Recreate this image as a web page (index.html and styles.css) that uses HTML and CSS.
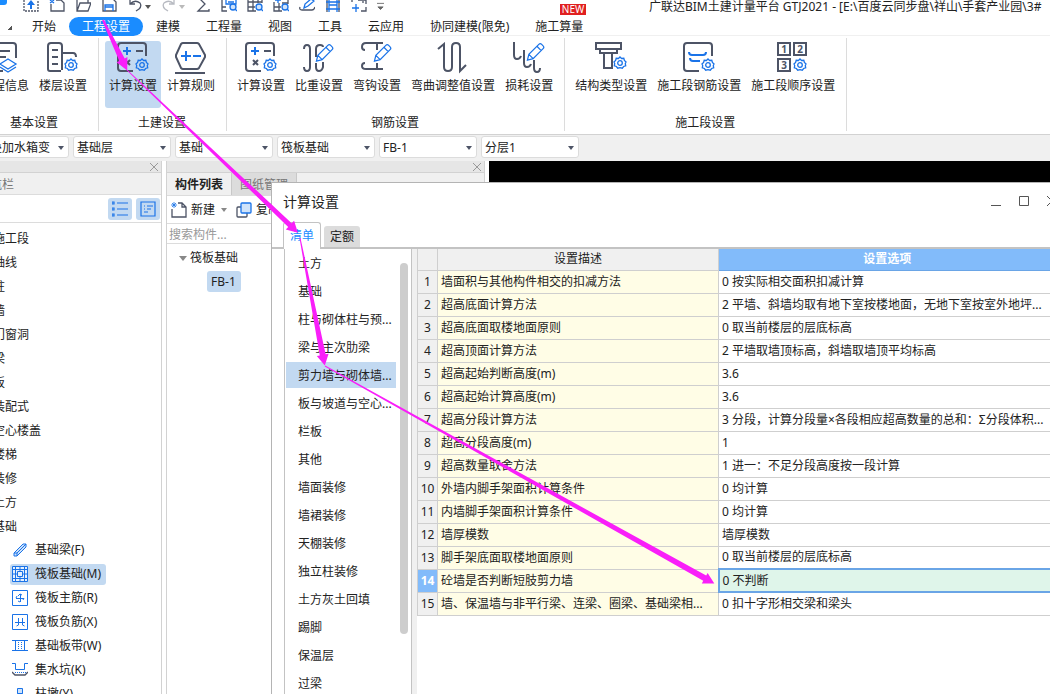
FILE: index.html
```html
<!DOCTYPE html>
<html lang="zh-CN">
<head>
<meta charset="utf-8">
<title>广联达BIM土建计量平台 GTJ2021</title>
<link rel="stylesheet" href="styles.css">
</head>
<body>
<svg class="defs" aria-hidden="true">
  <symbol id="gear" viewBox="0 0 14 14"><path d="M7 1l1.6 1.5 2.2-.2.6 2.1L13 6l-.7 1.6.4 2.2-2.1.7L9.300 12.200 7 11.700 4.700 12.200 3.400 10.500l-2.100-.7.4-2.200L1 6l1.600-1.600.6-2.100 2.200.2z"/><circle cx="7" cy="7" r="2.300"/></symbol>
  <symbol id="pencil" viewBox="0 0 20 20"><path d="M1.500 18.500l1.500-6L13.500 2q1.500-1.500 3 0l1.500 1.500q1.500 1.500 0 3L7.500 17zM11.500 4l4.500 4.500M3 12.500l4.500 4.500"/></symbol>
  <symbol id="calc" viewBox="0 0 32 32"><path class="d" d="M29 14V4q0-3-3-3H4Q1 1 1 4v22q0 3 3 3h12M19 9h7M8 18l5 5M13 18l-5 5"/><path class="b" d="M6 9h8M10 5v8"/><use href="#gear" class="t" x="18" y="16" width="14" height="14"/></symbol>
</svg>
<div class="app">
  <header class="titlebar">
    <div class="quick">
      <svg class="logo" viewBox="0 0 13 12"><path d="M0 0h7v2q0 3-3 3H0z" fill="#1a8cff"/></svg>
      <svg viewBox="0 4 16 12"><path class="d thin dash" d="M1 4v11h14V4"/><path class="b" d="M8 13V6"/><path d="M4 9l4-5 4 5z" fill="#1a73e8"/></svg>
      <svg viewBox="0 4 16 12"><path class="d thin" d="M2 8v7h13V7l-3-3H7"/><path class="b thin" d="M1 4l4 3M5 4L1 7"/></svg>
      <svg viewBox="0 4 16 12"><path class="d thin" d="M2 3v12h11l3-8H5L2 15M13 7V4"/></svg>
      <svg viewBox="0 4 16 12"><path class="d thin" d="M2 2v13h13V6l-3-3"/><path class="b thin" d="M4 15V9h8v6M4 11h8"/></svg>
      <span class="pair"><svg viewBox="0 4 16 12"><path class="d thin" d="M3 3v5h5M3 8q5-5 10-1 2 3-1 6l-3 2"/></svg><i class="caret"></i></span>
      <span class="pair faded"><svg viewBox="0 4 16 12"><path class="d thin" d="M13 3v5H8M13 8Q8 3 3 7q-2 3 1 6l3 2"/></svg><i class="caret"></i></span>
      <svg viewBox="0 4 16 12"><path class="d thin" d="M4 2l6 6-7 7h11v-2"/></svg>
      <svg viewBox="0 4 16 12"><path class="d thin" d="M1 2v13h5M1 11h4"/><path class="b thin" d="M5 3v5h10V3M7 6h6M14 13l2 2"/><circle class="b thin tint" cx="12" cy="11" r="3"/></svg>
      <svg viewBox="0 4 16 12"><path class="d thin" d="M1 2v13h8M1 6h14M1 11h7M6 2v13M11 2v5M15 2v5"/><circle class="b thin tint" cx="12" cy="11" r="3"/><path class="b thin" d="M14 13l2 2"/></svg>
      <svg viewBox="0 4 16 12"><path class="d thin" d="M1 6v9h8M1 11h7M6 7v8M15 3v5M9 7h6"/><path class="b thin" d="M2 4h6M5 3v4M14 13l2 2"/><circle class="b thin tint" cx="12" cy="11" r="3"/></svg>
      <svg viewBox="0 4 16 12"><path class="d thin" d="M1 11q-1 3 2 3h10q2 0 3-3"/><path class="b thin" d="M5 12l1-4 6-5 3 2-6 5z"/></svg>
      <svg viewBox="0 4 16 12"><path class="d thin" d="M2 2v14M14 2v14"/><path class="b thin" d="M4 2v14M12 2v14M1 6h14M1 13h14M4 9h8"/></svg>
      <svg viewBox="0 4 16 12"><path class="d thin" d="M1 6V4M7 4h8v4M15 11v4h-5M12 5v2"/><path class="b thin" d="M1 12h7M5 8v8"/></svg>
      <svg class="more" viewBox="0 0 8 12"><path d="M0 3h8M1 7h6L4 10z" stroke="#666" fill="#666"/></svg>
    </div>
    <h1 class="window-title">广联达BIM土建计量平台 GTJ2021 - [E:\百度云同步盘\祥山\手套产业园\3#</h1>
  </header>

  <nav class="menu">
    <i class="corner"></i>
    <button>开始</button><button class="current">工程设置</button><button>建模</button><button>工程量</button><button>视图</button><button>工具</button><button>云应用</button><button>协同建模(限免)</button><button class="has-badge">施工算量<span class="badge">NEW</span></button>
  </nav>

  <section class="ribbon">
    <div class="group first">
      <div class="tools">
        <button><svg viewBox="0 0 32 32"><path class="d" d="M14 29H4q-3 0-3-3V4q0-3 3-3h20q3 0 3 3v12M8 9h13M8 15h9"/><path class="t" d="M19 17l8 5-8 5-8-5zM11 25l8 5 8-5"/></svg>工程信息</button>
        <button><svg viewBox="0 0 32 32"><path class="d" d="M14 29H3q-2 0-2-2V4q0-3 3-3h8q3 0 3 3v24M15 11h11q3 0 3 4M5 8h6M5 15h6M5 22h6"/><use href="#gear" class="t" x="17" y="16" width="14" height="14"/></svg>楼层设置</button>
      </div>
      <div class="caption">基本设置</div>
    </div>
    <div class="group">
      <div class="tools">
        <button class="selected"><svg viewBox="0 0 32 32"><use href="#calc"/></svg>计算设置</button>
        <button><svg viewBox="0 0 32 32"><path class="d" d="M8 1h14q1 0 2 1l6 11v2l-6 11q-1 1-2 1H8q-1 0-2-1L1 15v-2L6 2q1-1 2-1zM0 31h30"/><path class="b" d="M6 14h10M11 9v10M18 14h8"/></svg>计算规则</button>
      </div>
      <div class="caption">土建设置</div>
    </div>
    <div class="group">
      <div class="tools">
        <button><svg viewBox="0 0 32 32"><use href="#calc"/></svg>计算设置</button>
        <button><svg viewBox="0 0 32 32"><path class="d" d="M1 7q0-4 3-4t3 4v18q0 4-3 4t-3-4M13 15V7q0-4 4-4 3 0 3 2M13 21v4q0 4 3 4t4-4v-5"/><use href="#pencil" class="t" x="12" y="1" width="19" height="20"/></svg>比重设置</button>
        <button><svg viewBox="0 0 32 32"><path class="d" d="M4 8Q1 8 1 5q0-4 4-4h17M16 1v7M4 21q-3 0-3 3 0 3 4 3h17M16 27v-6"/><use href="#pencil" class="t" x="12" y="1" width="19" height="20"/></svg>弯钩设置</button>
        <button><svg viewBox="0 0 32 32"><path class="d" d="M1 7l6-5v23q0 4 4 4t4-4V5q0-4 4-4t4 4v24l6-6"/></svg>弯曲调整值设置</button>
        <button><svg viewBox="0 0 32 32"><path class="d" d="M1 0v13q0 4 3 4t4-3M11 8v13q0 4 3 4t4-3M21 18v8q0 4 3 4t3-4"/><use href="#pencil" class="t" x="13" y="0" width="19" height="20"/></svg>损耗设置</button>
      </div>
      <div class="caption">钢筋设置</div>
    </div>
    <div class="group">
      <div class="tools">
        <button><svg viewBox="0 0 32 32"><path class="d" d="M1 1h25v6H1zM5 7v4h17V7M9 11v15h8V11"/><use href="#gear" class="t" x="18" y="14" width="14" height="14"/></svg>结构类型设置</button>
        <button><svg viewBox="0 0 32 32"><path class="d" d="M29 14V4q0-3-3-3H4Q1 1 1 4v22q0 3 3 3h12"/><path class="b" d="M6 10q0 3 3 3h11q3 0 3-3M7 16q0 3 3 3h7"/><use href="#gear" class="t" x="18" y="16" width="14" height="14"/></svg>施工段钢筋设置</button>
        <button><svg viewBox="0 0 32 32"><path class="d" d="M1 1h12v12H1zM17 1h12v12H17zM1 17h12v12H1z"/><g class="digits"><text x="7" y="11">1</text><text x="23" y="11">2</text><text x="7" y="27">3</text></g><use href="#gear" class="t" x="16" y="16" width="14" height="14"/></svg>施工段顺序设置</button>
      </div>
      <div class="caption">施工段设置</div>
    </div>
  </section>

  <div class="filters">
    <label class="combo"><select aria-label="工程"><option>叠加水箱变</option></select></label>
    <label class="combo"><select aria-label="楼层"><option>基础层</option></select></label>
    <label class="combo"><select aria-label="构件大类"><option>基础</option></select></label>
    <label class="combo"><select aria-label="构件类型"><option>筏板基础</option></select></label>
    <label class="combo"><select aria-label="构件"><option>FB-1</option></select></label>
    <label class="combo"><select aria-label="分层"><option>分层1</option></select></label>
  </div>

  <main class="work">
    <aside class="panel navigator">
      <div class="grip"><button class="close" aria-label="关闭"><svg viewBox="0 0 8 8"><path d="M0 0l8 8M8 0L0 8"/></svg></button></div>
      <h2 class="panel-title">导航栏</h2>
      <div class="view-buttons">
        <button aria-label="列表"><svg viewBox="0 0 16 16"><path class="t" d="M0 1h2v2H0zM0 7h2v2H0zM0 13h2v2H0zM5 2h11M5 8h11M5 14h11"/></svg></button>
        <button aria-label="详情"><svg viewBox="0 0 16 16"><path class="t" d="M1 1h14v14H1zM4 5h1M7 5h6M4 8h1M7 8h4M4 11h4"/></svg></button>
      </div>
      <ul class="tree">
        <li>施工段</li><li>轴线</li><li>柱</li><li>墙</li><li>门窗洞</li><li>梁</li><li>板</li><li>装配式</li><li>空心楼盖</li><li>楼梯</li><li>装修</li><li>土方</li><li>基础</li>
      </ul>
      <ul class="leaves">
        <li><span><svg viewBox="0 0 16 16"><path class="t tint" d="M2 11L11 2h3v3L5 14H2zM2 11h3v3M5 11l9-9"/></svg>基础梁(F)</span></li>
        <li><span class="selected"><svg viewBox="0 0 16 16"><path class="t pale" d="M.5.5h15v15H.5zM.5 3.500h15M.5 12.500h15M3.500.5v15M12.500.5v15M5.500 5.500h5v5h-5zM8 .5v5M8 10.500v5M.5 8h5M10.500 8h5"/></svg>筏板基础(M)</span></li>
        <li><span><svg viewBox="0 0 16 16"><path class="t" d="M.5.5h15v15H.5zM4 8.500h8M8.500 4v8M6 6l2-2 2 1M6 11l2 1M4 8l1-2M12 8l-1 2"/></svg>筏板主筋(R)</span></li>
        <li><span><svg viewBox="0 0 16 16"><path class="t" d="M.5.5h15v15H.5zM3 8.500h10M6.500 4v7l-2 1M10.500 4v7l2 1"/></svg>筏板负筋(X)</span></li>
        <li><span><svg viewBox="0 0 16 16"><path class="t" d="M0 2.500h16M0 12.500h16M3.500 3v10M12.500 3v10"/><path class="t dots" d="M6.500 4v8M9.500 4v8"/></svg>基础板带(W)</span></li>
        <li><span><svg viewBox="0 0 16 16"><path class="t" d="M0 1.500h3.500v6h9v-6H16"/><path class="t dots" d="M3 10.500h11"/><path class="d thin" d="M0 10l3 3h10l3-3"/></svg>集水坑(K)</span></li>
        <li><span><svg viewBox="0 0 16 16"><path class="t tint" d="M5.500 2.500h5v5h-5zM5 8l-2 6h10l-2-6z"/></svg>柱墩(Y)</span></li>
      </ul>
    </aside>

    <section class="panel components">
      <div class="grip"><button class="close" aria-label="关闭"><svg viewBox="0 0 8 8"><path d="M0 0l8 8M8 0L0 8"/></svg></button></div>
      <div class="panel-tabs"><button class="current">构件列表</button><button>图纸管理</button></div>
      <div class="actions">
        <button><svg viewBox="0 0 16 16"><path class="d thin" d="M1 7v8h14V5l-4-4H7M11 1v4h4"/><path class="b fine" d="M1 1l4 4M5 1L1 5M3 0v6M0 3h6"/></svg>新建<i class="caret"></i></button>
        <button><svg viewBox="0 0 16 16"><path class="d thin" d="M5 5H2q-1 0-1 1v8q0 1 1 1h8q1 0 1-1v-3"/><rect class="t tint" x="5" y="1" width="10" height="10" rx="1"/></svg>复制</button>
      </div>
      <input class="search" type="text" placeholder="搜索构件..." aria-label="搜索构件">
      <div class="node"><i class="caret"></i>筏板基础</div>
      <div class="leaf">FB-1</div>
    </section>

    <section class="canvas" aria-label="绘图区"></section>
  </main>

  <section class="dialog" role="dialog" aria-label="计算设置">
    <header class="dialog-head">
      <h2>计算设置</h2>
      <div class="window-buttons">
        <button aria-label="最小化"><svg viewBox="0 0 10 10"><path d="M0 9.500h10"/></svg></button>
        <button aria-label="最大化"><svg viewBox="0 0 10 10"><path d="M.5.5h9v9h-9z"/></svg></button>
        <button aria-label="关闭"><svg viewBox="0 0 10 10"><path d="M0 0l10 10M10 0L0 10"/></svg></button>
      </div>
    </header>
    <div class="dialog-tabs"><button class="current">清单</button><button>定额</button></div>
    <div class="dialog-body">
      <div class="side">
        <ul class="categories">
          <li>土方</li><li>基础</li><li>柱与砌体柱与预...</li><li>梁与主次肋梁</li><li class="selected">剪力墙与砌体墙...</li><li>板与坡道与空心...</li><li>栏板</li><li>其他</li><li>墙面装修</li><li>墙裙装修</li><li>天棚装修</li><li>独立柱装修</li><li>土方灰土回填</li><li>踢脚</li><li>保温层</li><li>过梁</li>
        </ul>
        <div class="scroll"><i></i></div>
      </div>
      <div class="sheet">
        <table>
          <colgroup><col class="c-no"><col class="c-desc"><col></colgroup>
          <thead><tr><th></th><th>设置描述</th><th class="active">设置选项</th></tr></thead>
          <tbody>
            <tr><th>1</th><td>墙面积与其他构件相交的扣减方法</td><td>0 按实际相交面积扣减计算</td></tr>
            <tr><th>2</th><td>超高底面计算方法</td><td>2 平墙、斜墙均取有地下室按楼地面，无地下室按室外地坪...</td></tr>
            <tr><th>3</th><td>超高底面取楼地面原则</td><td>0 取当前楼层的层底标高</td></tr>
            <tr><th>4</th><td>超高顶面计算方法</td><td>2 平墙取墙顶标高，斜墙取墙顶平均标高</td></tr>
            <tr><th>5</th><td>超高起始判断高度(m)</td><td>3.6</td></tr>
            <tr><th>6</th><td>超高起始计算高度(m)</td><td>3.6</td></tr>
            <tr><th>7</th><td>超高分段计算方法</td><td>3 分段，计算分段量×各段相应超高数量的总和：Σ分段体积...</td></tr>
            <tr><th>8</th><td>超高分段高度(m)</td><td>1</td></tr>
            <tr><th>9</th><td>超高数量取舍方法</td><td>1 进一：不足分段高度按一段计算</td></tr>
            <tr><th>10</th><td>外墙内脚手架面积计算条件</td><td>0 均计算</td></tr>
            <tr><th>11</th><td>内墙脚手架面积计算条件</td><td>0 均计算</td></tr>
            <tr><th>12</th><td>墙厚模数</td><td>墙厚模数</td></tr>
            <tr><th>13</th><td>脚手架底面取楼地面原则</td><td>0 取当前楼层的层底标高</td></tr>
            <tr class="picked"><th>14</th><td>砼墙是否判断短肢剪力墙</td><td>0 不判断</td></tr>
            <tr><th>15</th><td>墙、保温墙与非平行梁、连梁、圈梁、基础梁相...</td><td>0 扣十字形相交梁和梁头</td></tr>
          </tbody>
        </table>
      </div>
    </div>
  </section>

  <svg class="arrows" aria-hidden="true">
    <path transform="translate(103 20) rotate(64.400)" d="M0-1L44-3v-3L56 0 44 6V3L0 1z"/>
    <path transform="translate(127 70) rotate(43.600)" d="M0-.5L225-2.500V-6L236 0 225 6V2.500L0 .5z"/>
    <path transform="translate(300 238) rotate(79)" d="M0-.5L119-3v-3L130 0 119 6V3L0 .5z"/>
    <path transform="translate(325 366) rotate(29.200)" d="M0-.5L435-3v-3L446 0 435 6V3L0 .5z"/>
  </svg>
</div>
</body>
</html>
```
FILE: styles.css
```css
* { box-sizing: border-box; }

body {
  margin: 0;
  background: #fff;
  color: #222;
  font: 12px/16px "Noto Sans", "Noto Sans CJK SC", sans-serif;
}

h1, h2, ul { margin: 0; padding: 0; font-size: 12px; font-weight: 400; }
ul { list-style: none; }

button {
  margin: 0;
  padding: 0;
  border: 0;
  background: none;
  color: inherit;
  font: inherit;
  white-space: nowrap;
}

svg { display: block; flex: none; fill: none; }
.defs { position: absolute; width: 0; height: 0; }
.d { stroke: #4d5466; stroke-width: 2; fill: none; }
.b { stroke: #1a73e8; stroke-width: 2; fill: none; }
.t { stroke: #1a73e8; stroke-width: 1.3; fill: none; }
.thin { stroke-width: 1.3; }
.fine { stroke-width: .8; }
.dash { stroke-dasharray: 2 1; }
.dots { stroke-dasharray: 1 1; }
.tint { fill: #cfe3fa; }
.pale { fill: #e6f1fd; }
.digits { fill: #4d5466; font-size: 10px; font-weight: 700; text-anchor: middle; }

.caret {
  flex: none;
  border: 3px solid transparent;
  border-top: 4px solid #555;
  border-bottom: 0;
}

.app {
  position: relative;
  display: flex;
  flex-direction: column;
  height: 100vh;
  overflow: hidden;
}

/* Title bar */
.titlebar { display: flex; flex: none; height: 17px; }
.quick { display: flex; flex: none; gap: 10px; width: 649px; }
.quick svg { width: 16px; height: 12px; }
.quick .logo { width: 13px; }
.quick .more { width: 7px; }
.pair { display: flex; align-items: center; gap: 2px; height: 12px; }
.pair .caret { margin-top: 1px; }
.faded { opacity: .4; }
.window-title { line-height: 13px; white-space: nowrap; }

/* Menu */
.menu {
  display: flex;
  flex: none;
  align-items: center;
  height: 19px;
  border-bottom: 1px solid #f0f0f0;
}
.menu button { height: 19px; padding: 1px 13px 0; }
.menu .current { border-radius: 10px; background: #1a8cff; color: #fff; }
.menu .corner {
  width: 4px;
  height: 4px;
  margin: 4px 7px 0 8px;
  background: linear-gradient(135deg, transparent 50%, #555 50%);
}
.has-badge { position: relative; }
.badge {
  position: absolute;
  right: 10px;
  top: -13px;
  padding: 0 2px;
  background: #e02020;
  color: #fff;
  font-size: 10px;
  line-height: 11px;
}

/* Ribbon */
.ribbon {
  display: flex;
  flex: none;
  padding: 2px 0 3px;
  border-bottom: 1px solid #d2d2d2;
}
.group { padding: 3px 7px 0 6px; border-right: 1px solid #dcdcdc; }
.group.first { margin-left: -29px; }
.tools { display: flex; gap: 2px; }
.tools button {
  display: flex;
  flex-direction: column;
  align-items: center;
  gap: 4px;
  height: 67px;
  padding: 1px 4px 0;
  border-radius: 3px;
}
.tools svg { width: 32px; height: 32px; }
.tools .selected { background: #c2d9f1; }
.caption { padding-top: 7px; text-align: center; }

/* Filter row */
.filters {
  display: flex;
  flex: none;
  gap: 4px;
  height: 26px;
  padding: 1px 0 3px;
  margin-left: -29px;
  background: #f0f0f0;
}
.combo { position: relative; width: 98px; }
.combo select {
  width: 100%;
  height: 22px;
  padding: 1px 3px 0;
  border: 1px solid #dcdcdc;
  border-radius: 3px;
  background: #fff;
  color: #222;
  font: inherit;
  appearance: none;
}
.combo:first-child select { padding-left: 18px; }
.combo::after {
  content: "";
  position: absolute;
  right: 5px;
  top: 10px;
  border: 3px solid transparent;
  border-top: 4px solid #4d5466;
  border-bottom: 0;
}

/* Work area */
.work { display: flex; flex: 1; gap: 4px; min-height: 0; }
.panel { flex: none; overflow: hidden; border-right: 1px solid #d2d2d2; }
.navigator { width: 162px; }
.components { width: 319px; border-left: 1px solid #d2d2d2; }
.canvas { flex: 1; height: 22px; background: #000; }
.grip {
  display: flex;
  justify-content: flex-end;
  align-items: center;
  height: 12px;
  padding-right: 3px;
  border-bottom: 1px solid #d2d2d2;
  background: #e6e6e6;
}
.close svg { width: 8px; height: 8px; stroke: #999; }
.panel-title {
  height: 22px;
  border-bottom: 1px solid #dcdcdc;
  background: #f0f0f0;
  color: #777;
  line-height: 23px;
  text-indent: -22px;
}
.view-buttons {
  display: flex;
  justify-content: flex-end;
  gap: 4px;
  height: 28px;
  padding: 3px 1px;
  border-bottom: 1px solid #dcdcdc;
}
.view-buttons button {
  display: grid;
  place-items: center;
  width: 24px;
  height: 22px;
  border-radius: 3px;
  background: #c2d9f1;
}
.view-buttons svg { width: 16px; height: 16px; }
.view-buttons .t { stroke-width: 1.2; }
.tree { padding-top: 3px; margin-left: -7px; }
.tree li { line-height: 25px; height: 24px; }
.leaves { padding-left: 10px; }
.leaves li { display: flex; align-items: center; height: 24px; }
.leaves span {
  display: flex;
  align-items: center;
  gap: 7px;
  height: 21px;
  padding: 0 5px 0 2px;
  border-radius: 3px;
}
.leaves svg { width: 16px; height: 16px; }
.leaves .t { stroke-width: 1; }
.leaves .selected { background: #c2d9f1; }

.panel-tabs { display: flex; height: 23px; background: #f0f0f0; border-bottom: 1px solid #dcdcdc; }
.panel-tabs button { padding: 2px 8px 0; background: #dcdcdc; border-right: 1px solid #c8c8c8; color: #777; }
.panel-tabs .current { background: #f0f0f0; color: #222; font-weight: 700; }
.actions { display: flex; align-items: center; gap: 9px; height: 28px; padding: 1px 0 0 4px; border-bottom: 1px solid #dcdcdc; }
.actions button { display: flex; align-items: center; gap: 4px; }
.actions svg { width: 16px; height: 16px; }
.actions .caret { margin-left: 2px; border-top-color: #888; }
.search {
  display: block;
  width: 100%;
  height: 20px;
  padding: 1px 2px 0;
  border: 0;
  border-bottom: 1px solid #dcdcdc;
  outline: 0;
  font: inherit;
}
.search::placeholder { color: #999; opacity: 1; }
.node { display: flex; align-items: center; gap: 3px; padding: 2px 0 0 12px; line-height: 24px; }
.node .caret { border-width: 5px 4px 0; border-top-color: #888; }
.leaf {
  width: max-content;
  margin: 1px 0 0 40px;
  padding: 0 5px 0 4px;
  border-radius: 3px;
  background: #c2d9f1;
  line-height: 21px;
}

/* Settings dialog floats over the workspace and runs past the right edge */
.dialog {
  position: absolute;
  top: 182px;
  right: -8px;
  bottom: 0;
  left: 271px;
  display: flex;
  flex-direction: column;
  overflow: hidden;
  border: 1px solid #b4b4b4;
  border-bottom: 0;
  background: #fff;
}
.dialog-head { display: flex; justify-content: space-between; flex: none; height: 39px; padding-left: 11px; }
.dialog-head h2 { font-size: 14px; line-height: 38px; }
.window-buttons { display: flex; align-items: flex-start; gap: 18px; padding-top: 13px; }
.window-buttons svg { width: 10px; height: 10px; stroke: #555; }
.dialog-tabs {
  display: flex;
  align-items: flex-end;
  flex: none;
  gap: 3px;
  height: 27px;
  padding-left: 11px;
  border-bottom: 2px solid #c3c3c3;
}
.dialog-tabs button { height: 21px; padding: 0 6px; border-radius: 3px 3px 0 0; background: #dcdcdc; }
.dialog-tabs .current {
  height: 27px;
  margin-bottom: -2px;
  border: 1px solid #c3c3c3;
  border-bottom: 0;
  background: #fff;
  color: #1a8cff;
}
.dialog-body { display: flex; flex: 1; min-height: 0; margin-left: 12px; }
.side { display: flex; flex: none; width: 128px; border: solid #c3c3c3; border-width: 0 1px; }
.categories { flex: 1; padding: 1px 0 0 1px; }
.categories li { height: 26px; margin-bottom: 2px; padding-left: 12px; line-height: 28px; white-space: nowrap; }
.categories .selected { background: #c2d9f1; }
.scroll { width: 15px; padding: 14px 3px 0 4px; }
.scroll i { display: block; height: 371px; border-radius: 4px; background: #cdcdcd; }
.sheet { flex: 1; min-width: 0; border-left: 5px solid #f0f0f0; }

table { width: 100%; border-collapse: collapse; table-layout: fixed; }
.c-no { width: 20px; }
.c-desc { width: 281px; }
th, td { height: 23px; padding: 0; border: 1px solid #cfcfcf; overflow: hidden; white-space: nowrap; }
th { background: #f0f0f0; font-weight: 400; }
thead th { height: 21px; border-top: 0; }
thead .active { border-color: #6aa5e6; background: #82bbfa; color: #fff; font-weight: 700; }
td { padding-left: 3px; }
td:nth-child(2) { background: #fffde6; }
.picked th { background: #82bbfa; color: #fff; font-weight: 700; }
.picked td:last-child { border: 2px solid #6aa5e6; background: #dff5ea; }

/* Walk-through arrows */
.arrows { position: absolute; inset: 0; width: 100%; height: 100%; fill: #f91ef9; pointer-events: none; }
```
